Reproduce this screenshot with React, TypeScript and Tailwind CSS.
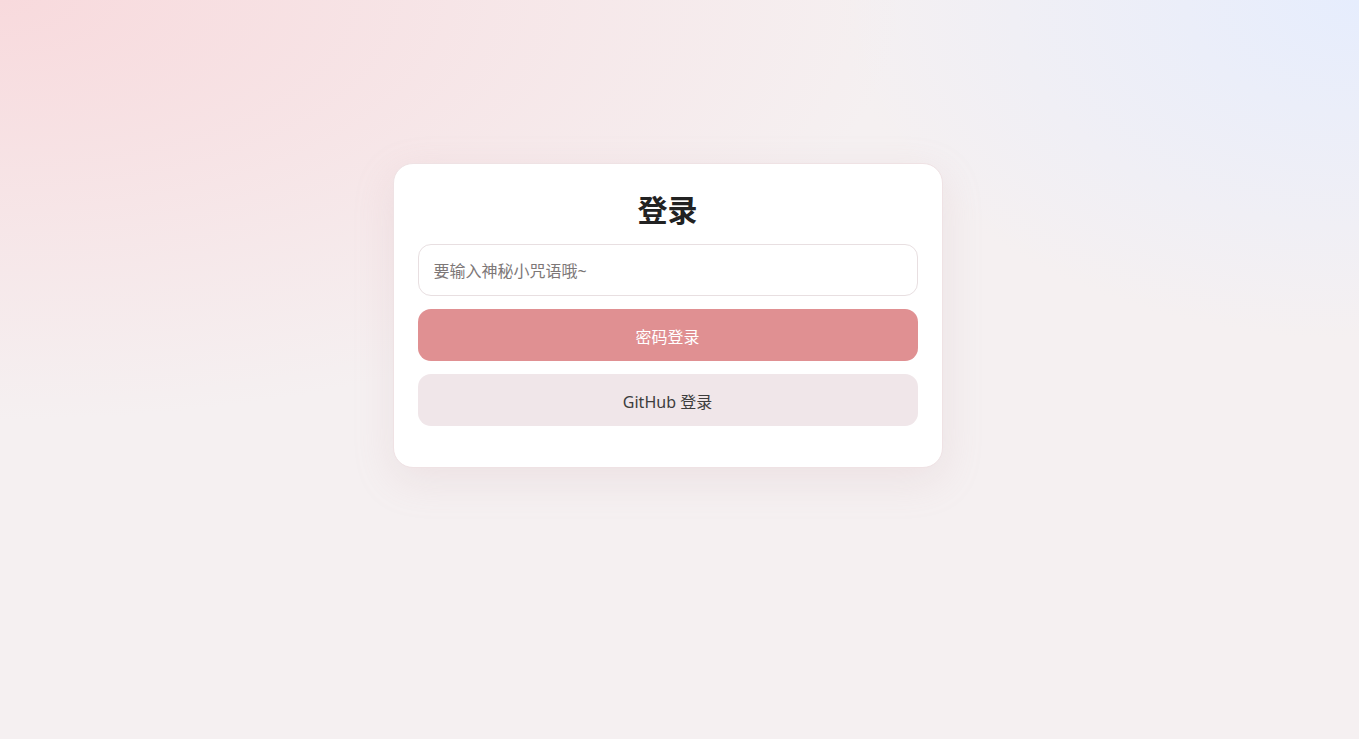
export default function App() {
  return (
    <div
      className="relative min-h-[739px] w-full overflow-hidden bg-[#f5f0f1]"
      style={{ fontFamily: '"Noto Sans", "Noto Sans CJK SC", sans-serif' }}
    >
      <div className="pointer-events-none absolute inset-0 bg-[radial-gradient(ellipse_900px_420px_at_0%_0%,#f8dadd_0%,rgba(248,218,221,0)_100%)]" />
      <div className="pointer-events-none absolute inset-0 bg-[radial-gradient(ellipse_520px_340px_at_100%_0%,#e6edfd_0%,rgba(230,237,253,0)_100%)]" />

      <div className="relative flex justify-center pt-[163px] pr-6">
        <div className="w-[550px] rounded-[20px] border border-[#efe2e4] bg-white px-6 pt-6 pb-[41px] shadow-[0_12px_40px_rgba(200,160,165,0.18)]">
          <h1 className="mb-3 text-center text-[30px] font-bold leading-[44px] text-[#222]">登录</h1>
          <div className="flex flex-col gap-[13px]">
            <input
              type="password"
              placeholder="要输入神秘小咒语哦~"
              className="h-[52px] w-full rounded-[13px] border border-[#e8dfe1] bg-white px-[15px] pt-[2px] text-[16px] text-[#333] outline-none placeholder:text-[#7d7777]"
            />
            <button className="h-[52px] w-full rounded-[13px] bg-[#e09092] pt-[3px] text-[16px] text-white">
              密码登录
            </button>
            <button className="h-[52px] w-full rounded-[13px] bg-[#f0e6e9] pt-[3px] text-[16px] text-[#3d3d3d]">
              GitHub 登录
            </button>
          </div>
        </div>
      </div>
    </div>
  );
}
